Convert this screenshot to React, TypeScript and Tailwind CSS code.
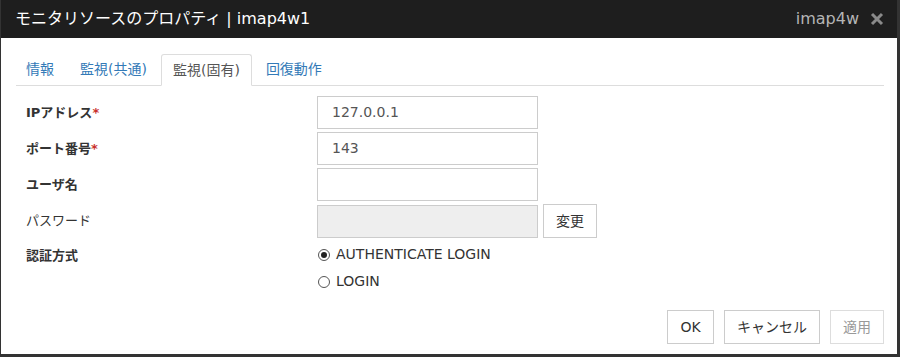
import React from "react";

const font = { fontFamily: '"DejaVu Sans", "Noto Sans CJK JP", sans-serif' };

function Label({ text, req, regular }: { text: string; req?: boolean; regular?: boolean }) {
  return (
    <div className={`w-[301px] shrink-0 pl-[10px] text-[13px] text-[#333] ${regular ? "font-normal" : "font-bold"}`}>
      {text}
      {req && <span className="text-[#c9302c]">*</span>}
    </div>
  );
}

export default function App() {
  return (
    <div
      className="w-[900px] h-[357px] bg-white flex flex-col border-l border-r-[3px] border-b-[3px] border-[#333] overflow-hidden"
      style={font}
    >
      <div className="h-[38px] shrink-0 bg-[#1e1e1e] flex items-center justify-between pl-[15px] pr-[16px] -mr-[3px] -ml-px">
        <div className="text-[16px] text-white">モニタリソースのプロパティ | imap4w1</div>
        <div className="flex items-center gap-[11px]">
          <span className="text-[16px] text-[#b5b5b5]">imap4w</span>
          <svg width="14" height="14" viewBox="0 0 14 14">
            <path d="M2 2 L12 12 M12 2 L2 12" stroke="#8a8a8a" strokeWidth="3" strokeLinecap="butt" />
          </svg>
        </div>
      </div>
      <div className="flex-1 flex flex-col pl-[15px] pr-[13px]">
        <div className="mt-[16px] h-[32px] flex items-end gap-[2px] border-b border-[#ddd] text-[14px]">
          <div className="h-[31px] pl-[10px] pr-[12px] flex items-center text-[#337ab7]">情報</div>
          <div className="h-[31px] px-[12px] flex items-center text-[#337ab7]">監視(共通)</div>
          <div className="h-[32px] -mb-px px-[11px] flex items-center text-[#555] bg-white border border-[#ddd] border-b-white rounded-t-[3px]">
            監視(固有)
          </div>
          <div className="h-[31px] px-[12px] flex items-center text-[#337ab7]">回復動作</div>
        </div>
        <div className="mt-[10px] flex flex-col gap-[3px]">
          <div className="flex items-center">
            <Label text="IPアドレス" req />
            <div className="w-[221px] h-[33px] border border-[#ccc] flex items-center px-[14px] text-[14px] text-[#555]">
              127.0.0.1
            </div>
          </div>
          <div className="flex items-center">
            <Label text="ポート番号" req />
            <div className="w-[221px] h-[33px] border border-[#ccc] flex items-center px-[14px] text-[14px] text-[#555]">
              143
            </div>
          </div>
          <div className="flex items-center">
            <Label text="ユーザ名" />
            <div className="w-[221px] h-[33px] border border-[#ccc]" />
          </div>
          <div className="flex items-center">
            <Label text="パスワード" regular />
            <div className="w-[221px] h-[33px] border border-[#ccc] bg-[#eeeeee]" />
            <div className="ml-[5px] w-[54px] h-[34px] border border-[#ccc] flex items-center justify-center text-[14px] text-[#333]">
              変更
            </div>
          </div>
          <div className="flex items-start">
            <div className="pt-[5px]">
              <Label text="認証方式" />
            </div>
            <div className="flex flex-col text-[14px] text-[#333]">
              <div className="h-[27px] flex items-center gap-[6px] pl-px">
                <span className="w-[12px] h-[12px] rounded-full border border-[#555] flex items-center justify-center">
                  <span className="w-[6px] h-[6px] rounded-full bg-[#222]" />
                </span>
                AUTHENTICATE LOGIN
              </div>
              <div className="h-[27px] flex items-center gap-[6px] pl-px">
                <span className="w-[12px] h-[12px] rounded-full border border-[#555]" />
                LOGIN
              </div>
            </div>
          </div>
        </div>
        <div className="mt-auto mb-[10px] flex justify-end gap-[10px] text-[14px]">
          <div className="w-[47px] h-[34px] border border-[#ccc] flex items-center justify-center text-[#333]">OK</div>
          <div className="w-[96px] h-[34px] border border-[#ccc] flex items-center justify-center text-[#333]">キャンセル</div>
          <div className="w-[54px] h-[34px] border border-[#ddd] flex items-center justify-center text-[#999]">適用</div>
        </div>
      </div>
    </div>
  );
}
